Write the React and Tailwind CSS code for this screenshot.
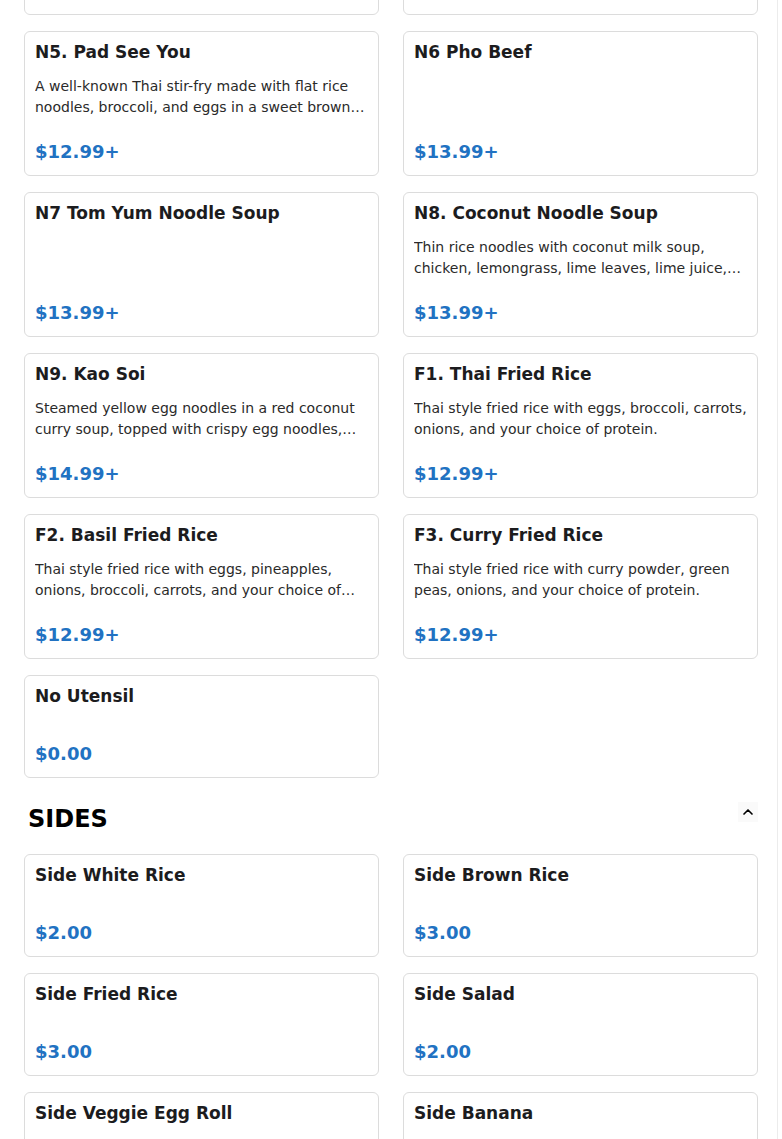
import React from "react";
import { ChevronUp } from "lucide-react";

const mains = [
  { name: "N5. Pad See You", desc: "A well-known Thai stir-fry made with flat rice noodles, broccoli, and eggs in a sweet brown sauce with your choice of protein.", price: "$12.99+" },
  { name: "N6 Pho Beef", desc: "", price: "$13.99+" },
  { name: "N7 Tom Yum Noodle Soup", desc: "", price: "$13.99+" },
  { name: "N8. Coconut Noodle Soup", desc: "Thin rice noodles with coconut milk soup, chicken, lemongrass, lime leaves, lime juice, and cilantro.", price: "$13.99+" },
  { name: "N9. Kao Soi", desc: "Steamed yellow egg noodles in a red coconut curry soup, topped with crispy egg noodles, pickled mustard greens and shallots.", price: "$14.99+" },
  { name: "F1. Thai Fried Rice", desc: "Thai style fried rice with eggs, broccoli, carrots, onions, and your choice of protein.", price: "$12.99+" },
  { name: "F2. Basil Fried Rice", desc: "Thai style fried rice with eggs, pineapples, onions, broccoli, carrots, and your choice of protein.", price: "$12.99+" },
  { name: "F3. Curry Fried Rice", desc: "Thai style fried rice with curry powder, green peas, onions, and your choice of protein.", price: "$12.99+" },
  { name: "No Utensil", desc: "", price: "$0.00" },
];

const sides = [
  { name: "Side White Rice", price: "$2.00" },
  { name: "Side Brown Rice", price: "$3.00" },
  { name: "Side Fried Rice", price: "$3.00" },
  { name: "Side Salad", price: "$2.00" },
  { name: "Side Veggie Egg Roll", price: "$2.00" },
  { name: "Side Banana", price: "$3.00" },
];

function Card({ name, desc, price }) {
  return (
    <div className="flex flex-col rounded-[6px] border border-[#dcdcdc] bg-white p-[10px]">
      <div className="mb-[14px] text-[17px] font-bold leading-[20px] text-[#1c1c1e]">{name}</div>
      {desc ? (
        <p className="line-clamp-2 text-[14px] leading-[21px] text-[#2a2a2a]">{desc}</p>
      ) : null}
      <div className="mt-auto pt-[22px] pb-px text-[18px] font-bold leading-[24px] text-[#2172c2]">{price}</div>
    </div>
  );
}

export default function App() {
  return (
    <div className="flex min-h-screen w-full bg-white font-['DejaVu_Sans',sans-serif]">
      <div className="w-[777px] pl-6 pr-[19px]">
        <div className="flex h-[15px] flex-col justify-end overflow-hidden">
          <div className="grid grid-cols-2 gap-x-6">
            <Card name="N3. Pad Kee Mao" desc="" price="$12.99+" />
            <Card name="N4. Pad Woon Sen" desc="" price="$12.99+" />
          </div>
        </div>
        <div className="mt-4 grid grid-cols-2 gap-x-6 gap-y-4">
          {mains.map((m) => (
            <Card key={m.name} {...m} />
          ))}
        </div>
        <div className="flex items-start justify-between pl-1 pt-[25px] pb-[19px]">
          <h2 className="text-[24px] font-bold leading-[32px] text-black">SIDES</h2>
          <div className="-mt-px flex h-5 w-5 items-center justify-center bg-[#fafafa]">
            <ChevronUp size={16} strokeWidth={2.5} className="text-black" />
          </div>
        </div>
        <div className="grid grid-cols-2 gap-x-6 gap-y-4">
          {sides.map((s) => (
            <Card key={s.name} name={s.name} desc="" price={s.price} />
          ))}
        </div>
      </div>
      <div className="w-px self-stretch bg-[#ececec]" />
      <div className="flex-1" />
    </div>
  );
}
